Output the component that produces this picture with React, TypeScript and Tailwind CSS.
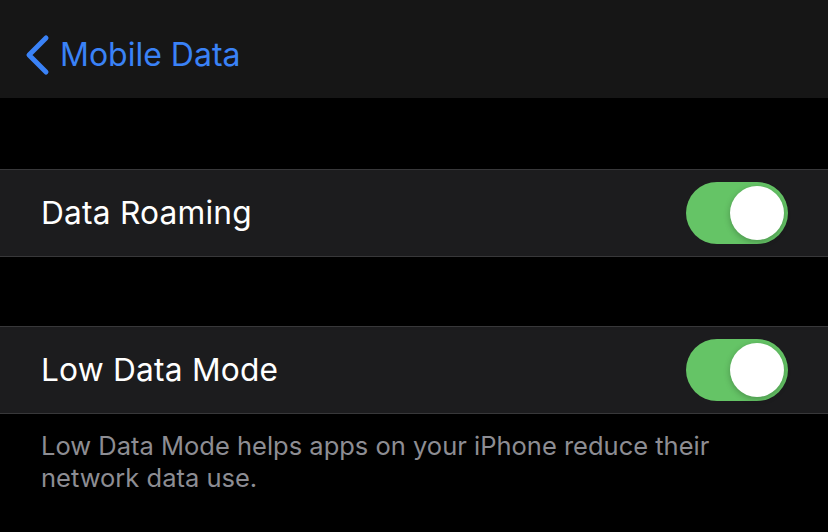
import React from "react";

function Toggle() {
  return (
    <div className="relative h-[62px] w-[102px] rounded-full bg-[#65c466]">
      <div className="absolute right-[4px] top-[4px] h-[54px] w-[54px] rounded-full bg-white shadow-[0_2px_6px_rgba(0,0,0,0.25)]" />
    </div>
  );
}

function Row({ label }: { label: string }) {
  return (
    <div className="flex h-[88px] items-center justify-between border-y border-[#38383a] bg-[#1c1c1e] pl-[41px] pr-[40px]">
      <span className="text-[31.7px] tracking-[0.2px] text-white">{label}</span>
      <Toggle />
    </div>
  );
}

export default function App() {
  return (
    <div
      className="h-[532px] w-[828px] overflow-hidden bg-black"
      style={{ fontFamily: "Inter, 'Noto Sans', sans-serif" }}
    >
      <div className="flex h-[98px] items-center bg-[#161616] pl-[24px] pt-[12px]">
        <svg width="28" height="42" viewBox="0 0 28 42" className="mr-[8px]">
          <path d="M22 4 L5 21 L22 38" fill="none" stroke="#3a82f7" strokeWidth="5" strokeLinecap="round" strokeLinejoin="round" />
        </svg>
        <span className="text-[32px] text-[#3a82f7]">Mobile Data</span>
      </div>
      <div className="h-[71px]" />
      <Row label="Data Roaming" />
      <div className="h-[69px]" />
      <Row label="Low Data Mode" />
      <div className="pl-[41px] pr-[40px] pt-[16px] text-[25.5px] leading-[32px] text-[#8d8d93]">
        Low Data Mode helps apps on your iPhone reduce their network data use.
      </div>
    </div>
  );
}
